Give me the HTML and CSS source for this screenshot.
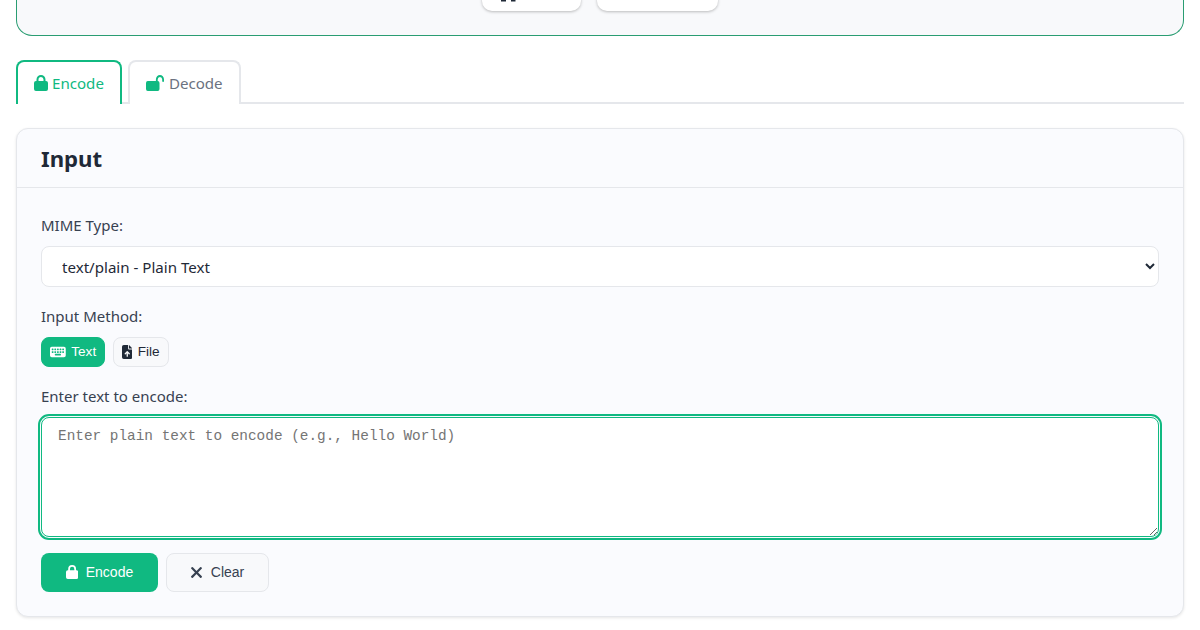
FILE: index.html
```html
<!DOCTYPE html>
<html lang="en">
<head>
    <meta charset="UTF-8">
    <meta name="viewport" content="width=device-width, initial-scale=1.0">
    <title>Data URI Encoder</title>
    <link rel="stylesheet" href="styles.css">
</head>
<body>
    <div class="hero">
        <div class="hero-actions">
            <a class="hero-btn hero-btn-first">
                <svg class="hero-icon" viewBox="0 0 14.5 1.5"><path d="M0 0h5v1.5H0zM10 0h4.5v1.5H10z"/></svg>
            </a>
            <a class="hero-btn hero-btn-second"></a>
        </div>
    </div>

    <div class="tabs">
        <button class="tab active">
            <svg class="icon" viewBox="0 0 448 512"><path d="M144 144v48h160v-48a80 80 0 0 0-160 0zm-64 48v-48a144 144 0 0 1 288 0v48h16a64 64 0 0 1 64 64v192a64 64 0 0 1-64 64H64a64 64 0 0 1-64-64V256a64 64 0 0 1 64-64z"/></svg>
            Encode
        </button>
        <button class="tab">
            <svg class="icon" viewBox="0 0 576 512"><path d="M352 144a144 144 0 0 1 288 0v48a32 32 0 0 1-64 0v-48a80 80 0 0 0-160 0v48h0a64 64 0 0 1 64 64v192a64 64 0 0 1-64 64H64a64 64 0 0 1-64-64V256a64 64 0 0 1 64-64h288z" transform="scale(.9 1)"/></svg>
            Decode
        </button>
    </div>

    <div class="card">
        <div class="card-header">
            <h2>Input</h2>
        </div>
        <div class="card-body">
            <label class="field-label" for="mime">MIME Type:</label>
            <select id="mime" class="select">
                <option>text/plain - Plain Text</option>
            </select>

            <div class="field-label">Input Method:</div>
            <div class="method-group">
                <button class="method-btn active">
                    <svg class="icon" viewBox="0 0 576 512"><path d="M64 64a64 64 0 0 0-64 64v256a64 64 0 0 0 64 64h448a64 64 0 0 0 64-64V128a64 64 0 0 0-64-64zm16 64h32a16 16 0 0 1 16 16v32a16 16 0 0 1-16 16H80a16 16 0 0 1-16-16v-32a16 16 0 0 1 16-16zm80 16a16 16 0 0 1 16-16h32a16 16 0 0 1 16 16v32a16 16 0 0 1-16 16h-32a16 16 0 0 1-16-16zm112-16h32a16 16 0 0 1 16 16v32a16 16 0 0 1-16 16h-32a16 16 0 0 1-16-16v-32a16 16 0 0 1 16-16zm80 16a16 16 0 0 1 16-16h32a16 16 0 0 1 16 16v32a16 16 0 0 1-16 16h-32a16 16 0 0 1-16-16zm112-16h32a16 16 0 0 1 16 16v32a16 16 0 0 1-16 16h-32a16 16 0 0 1-16-16v-32a16 16 0 0 1 16-16zM64 240a16 16 0 0 1 16-16h32a16 16 0 0 1 16 16v32a16 16 0 0 1-16 16H80a16 16 0 0 1-16-16zm112-16h32a16 16 0 0 1 16 16v32a16 16 0 0 1-16 16h-32a16 16 0 0 1-16-16v-32a16 16 0 0 1 16-16zm80 16a16 16 0 0 1 16-16h32a16 16 0 0 1 16 16v32a16 16 0 0 1-16 16h-32a16 16 0 0 1-16-16zm112-16h32a16 16 0 0 1 16 16v32a16 16 0 0 1-16 16h-32a16 16 0 0 1-16-16v-32a16 16 0 0 1 16-16zm80 16a16 16 0 0 1 16-16h32a16 16 0 0 1 16 16v32a16 16 0 0 1-16 16h-32a16 16 0 0 1-16-16zM176 336a16 16 0 0 1 16-16h192a16 16 0 0 1 16 16v32a16 16 0 0 1-16 16H192a16 16 0 0 1-16-16z" fill-rule="evenodd"/></svg>
                    Text
                </button>
                <button class="method-btn">
                    <svg class="icon" viewBox="0 0 384 512"><path d="M64 0A64 64 0 0 0 0 64v384a64 64 0 0 0 64 64h256a64 64 0 0 0 64-64V160H256a32 32 0 0 1-32-32V0zm192 0v128h128zM216 408a24 24 0 0 1-48 0V305l-31 31a24 24 0 0 1-34-34l72-72a24 24 0 0 1 34 0l72 72a24 24 0 0 1-34 34l-31-31z" fill-rule="evenodd"/></svg>
                    File
                </button>
            </div>

            <label class="field-label" for="text">Enter text to encode:</label>
            <textarea id="text" class="textarea" placeholder="Enter plain text to encode (e.g., Hello World)"></textarea>

            <div class="actions">
                <button class="btn btn-primary">
                    <svg class="icon" viewBox="0 0 448 512"><path d="M144 144v48h160v-48a80 80 0 0 0-160 0zm-64 48v-48a144 144 0 0 1 288 0v48h16a64 64 0 0 1 64 64v192a64 64 0 0 1-64 64H64a64 64 0 0 1-64-64V256a64 64 0 0 1 64-64z"/></svg>
                    Encode
                </button>
                <button class="btn btn-secondary">
                    <svg class="icon-x" viewBox="32 96 320 320"><path d="M342 150a32 32 0 0 0-45-45L192 210 87 105a32 32 0 0 0-45 45l105 106L42 361a32 32 0 0 0 45 45l105-105 105 105a32 32 0 0 0 45-45L237 256z"/></svg>
                    Clear
                </button>
            </div>
        </div>
    </div>
</body>
</html>
```

FILE: styles.css
```css
:root {
    --primary-color: #10b981;
    --dark-color: #1f2937;
    --gray-color: #6b7280;
    --border-color: #e5e7eb;
    --card-bg: #fafbfe;
}

* {
    margin: 0;
    padding: 0;
    box-sizing: border-box;
}

body {
    font-family: 'Noto Sans', sans-serif;
    background-color: #ffffff;
    color: var(--dark-color);
    padding: 0 16px;
    height: 630px;
    overflow: hidden;
}

button {
    font-family: 'Liberation Sans', Arial, sans-serif;
    cursor: pointer;
}

.icon {
    height: 1em;
    width: auto;
    fill: currentColor;
    flex-shrink: 0;
}

/* top panel, scrolled mostly out of view */
.hero {
    height: 36px;
    background-color: #f8f9fb;
    border: 1px solid #2a9d72;
    border-top: none;
    border-radius: 0 0 16px 16px;
    overflow: hidden;
}

.hero-actions {
    display: flex;
    justify-content: center;
    gap: 16px;
    margin-top: -29px;
}

.hero-btn {
    display: flex;
    align-items: flex-end;
    height: 40px;
    padding: 0 0 9.5px 19px;
    background: #ffffff;
    border-radius: 10px;
    box-shadow: 0 1px 3px rgba(0, 0, 0, 0.25);
}

.hero-btn-first {
    width: 99px;
}

.hero-btn-second {
    width: 121px;
}

.hero-icon {
    width: 14.5px;
    height: 1.5px;
    fill: var(--dark-color);
}

/* tabs */
.tabs {
    display: flex;
    gap: 6px;
    margin-top: 24px;
    height: 44px;
    border-bottom: 2px solid var(--border-color);
}

.tab {
    display: flex;
    align-items: center;
    gap: 5px;
    height: 44px;
    padding: 0 16px;
    background: #ffffff;
    border: 2px solid var(--border-color);
    border-bottom: none;
    border-radius: 8px 8px 0 0;
    font-family: 'Noto Sans', sans-serif;
    font-size: 15.1px;
    color: var(--gray-color);
}

.tab .icon {
    color: var(--primary-color);
    height: 16px;
}

.tab.active {
    gap: 4px;
    color: var(--primary-color);
    border-color: var(--primary-color);
}

/* card */
.card {
    margin-top: 24px;
    height: 489px;
    background-color: var(--card-bg);
    border: 1px solid var(--border-color);
    border-radius: 12px;
    box-shadow: 0 1px 3px rgba(0, 0, 0, 0.1);
}

.card-header {
    height: 59px;
    padding: 2px 24px 0;
    display: flex;
    align-items: center;
    border-bottom: 1px solid var(--border-color);
}

.card-header h2 {
    font-size: 22.2px;
    font-weight: 700;
    line-height: 1;
}

.card-body {
    padding: 24px 24px 0;
}

.field-label {
    display: block;
    font-size: 15px;
    line-height: 26px;
    color: #374151;
    margin-bottom: 8px;
}

.select {
    display: block;
    width: 100%;
    height: 41px;
    padding: 0 16px;
    margin-bottom: 16px;
    background-color: #ffffff;
    border: 1px solid var(--border-color);
    border-radius: 8px;
    font-family: 'Noto Sans', sans-serif;
    font-size: 15.1px;
    color: var(--dark-color);
}

.method-group {
    display: flex;
    gap: 7.5px;
    margin-bottom: 16px;
}

.method-btn {
    display: flex;
    align-items: center;
    gap: 5.5px;
    height: 30px;
    padding: 0 8px 1px;
    background-color: #f8f9fb;
    border: 1px solid var(--border-color);
    border-radius: 8px;
    font-size: 13.6px;
    color: var(--dark-color);
}

.method-btn .icon {
    height: 14px;
}

.method-btn.active {
    background-color: var(--primary-color);
    border-color: var(--primary-color);
    color: #ffffff;
}

.textarea {
    display: block;
    width: 100%;
    height: 120px;
    padding: 8px 16px;
    background-color: #ffffff;
    border: 1px solid var(--primary-color);
    border-radius: 8px;
    outline: 2px solid var(--primary-color);
    outline-offset: 1px;
    font-family: 'Liberation Mono', monospace;
    font-size: 14.4px;
    line-height: 20px;
    color: var(--dark-color);
}

.actions {
    display: flex;
    gap: 8px;
    margin-top: 16px;
}

.btn {
    display: flex;
    align-items: center;
    justify-content: center;
    gap: 7.75px;
    height: 39px;
    padding-bottom: 1px;
    border-radius: 8px;
    font-size: 14px;
}

.btn-primary {
    width: 117px;
    background-color: var(--primary-color);
    border: none;
    color: #ffffff;
}

.btn-secondary {
    width: 103px;
    gap: 9px;
    background-color: #f8f9fb;
    border: 1px solid var(--border-color);
    color: #374151;
}

.icon-x {
    width: 11px;
    height: 11px;
    fill: currentColor;
}
```
